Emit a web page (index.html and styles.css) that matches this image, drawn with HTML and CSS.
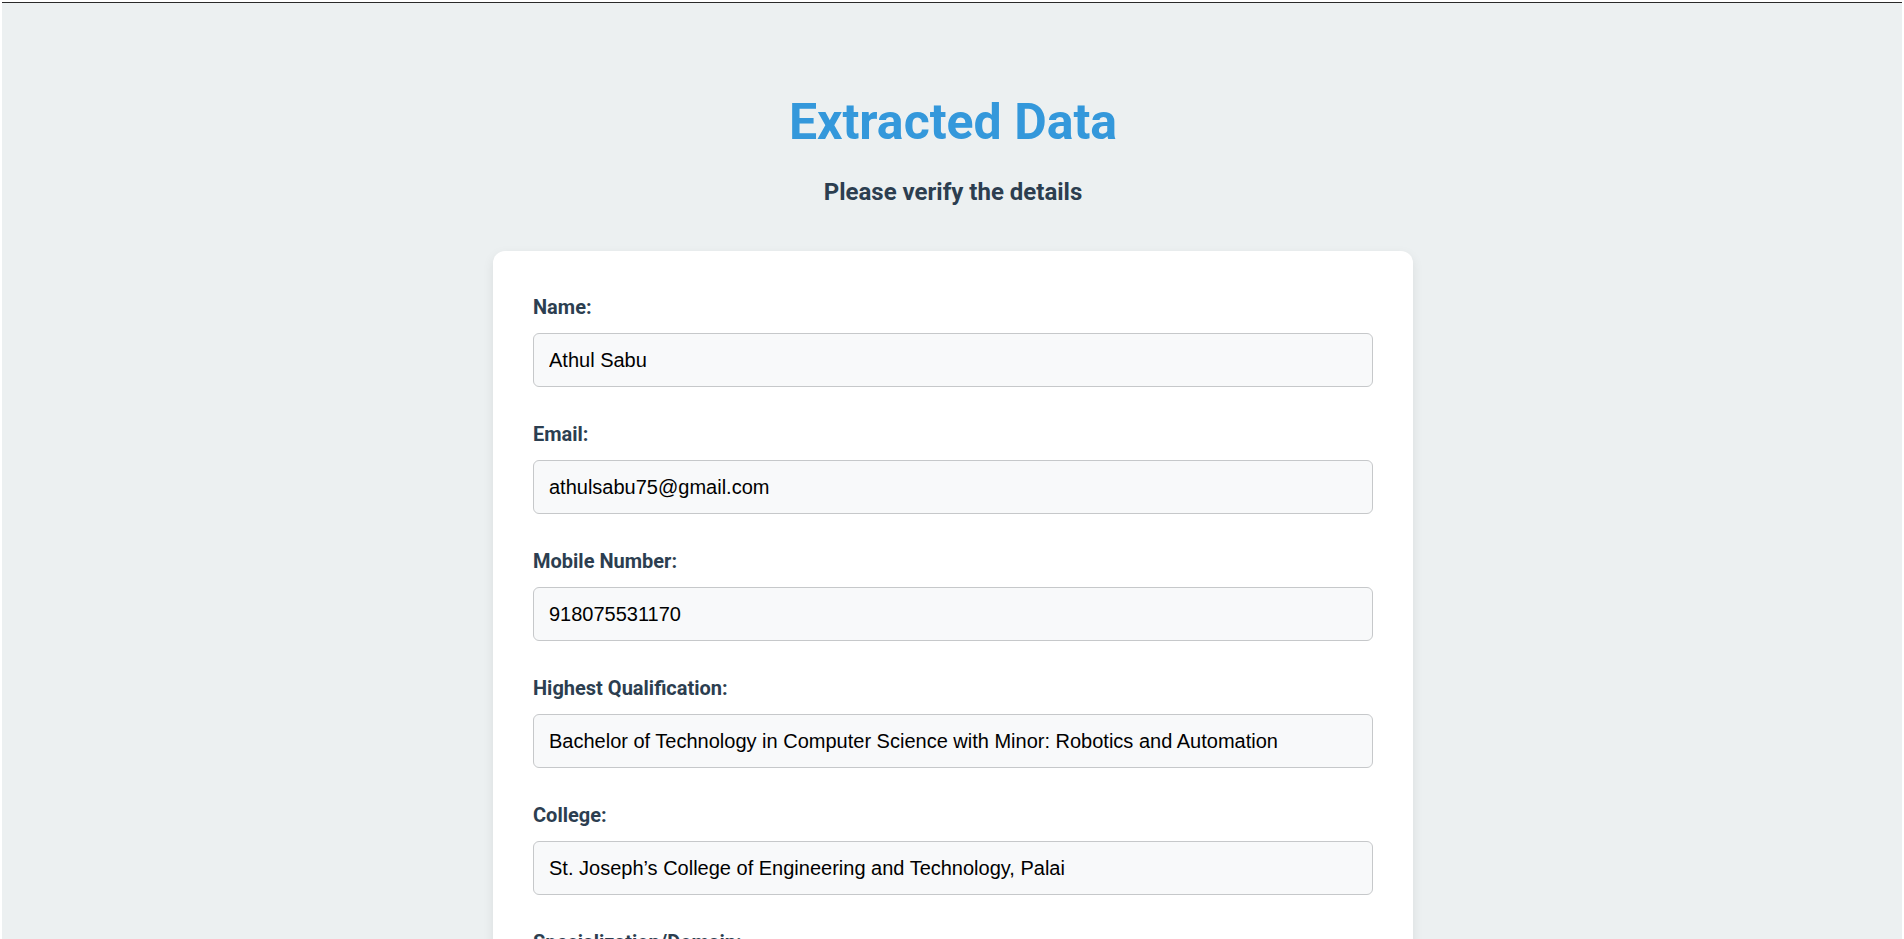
FILE: index.html
```html
<!DOCTYPE html>
<html lang="en">
<head>
<meta charset="utf-8">
<title>Extracted Data</title>
<link rel="stylesheet" href="styles.css">
</head>
<body>
<div class="frame">
  <main class="page">
    <h1 class="title">Extracted Data</h1>
    <h3 class="subtitle">Please verify the details</h3>
    <form class="card">
      <div class="group">
        <label class="label">Name:</label>
        <input class="field" type="text" value="Athul Sabu">
      </div>
      <div class="group">
        <label class="label">Email:</label>
        <input class="field" type="text" value="athulsabu75@gmail.com">
      </div>
      <div class="group">
        <label class="label">Mobile Number:</label>
        <input class="field" type="text" value="918075531170">
      </div>
      <div class="group">
        <label class="label">Highest Qualification:</label>
        <input class="field" type="text" value="Bachelor of Technology in Computer Science with Minor: Robotics and Automation">
      </div>
      <div class="group">
        <label class="label">College:</label>
        <input class="field" type="text" value="St. Joseph’s College of Engineering and Technology, Palai">
      </div>
      <div class="group">
        <label class="label">Specialization/Domain:</label>
        <input class="field" type="text" value="Computer Science">
      </div>
    </form>
  </main>
</div>
</body>
</html>
```
FILE: styles.css
```css
html, body {
  margin: 0;
  padding: 0;
  background: #ffffff;
}
.frame {
  margin: 2px 2px 0 2px;
  border-top: 1px solid #2a2a2a;
  background: #ecf0f1;
  min-height: 1200px;
}
.page {
  padding: 90px 0 0 2px;
  display: flex;
  flex-direction: column;
  align-items: center;
  font-family: Roboto, "Liberation Sans", sans-serif;
}
.title {
  margin: 0;
  font-size: 50px;
  font-weight: 700;
  color: #3498db;
  line-height: normal;
}
.subtitle {
  margin: 27px 0 0 0;
  font-size: 24px;
  font-weight: 700;
  color: #2c3e50;
  line-height: normal;
}
.card {
  margin-top: 45px;
  width: 920px;
  box-sizing: border-box;
  padding: 45px 40px 40px;
  background: #ffffff;
  border-radius: 12px;
  box-shadow: 0 4px 12px rgba(0, 0, 0, 0.08);
}
.group {
  display: flex;
  flex-direction: column;
  margin-bottom: 36px;
}
.label {
  font-size: 20px;
  font-weight: 700;
  color: #2c3e50;
  line-height: 23px;
  margin-bottom: 14px;
}
.field {
  box-sizing: border-box;
  width: 100%;
  height: 54px;
  padding: 0 15px;
  font-family: "Liberation Sans", Arial, sans-serif;
  font-size: 20px;
  color: #000000;
  background: #f8f9fa;
  border: 1px solid #c6c8ca;
  border-radius: 6px;
  outline: none;
}
```
